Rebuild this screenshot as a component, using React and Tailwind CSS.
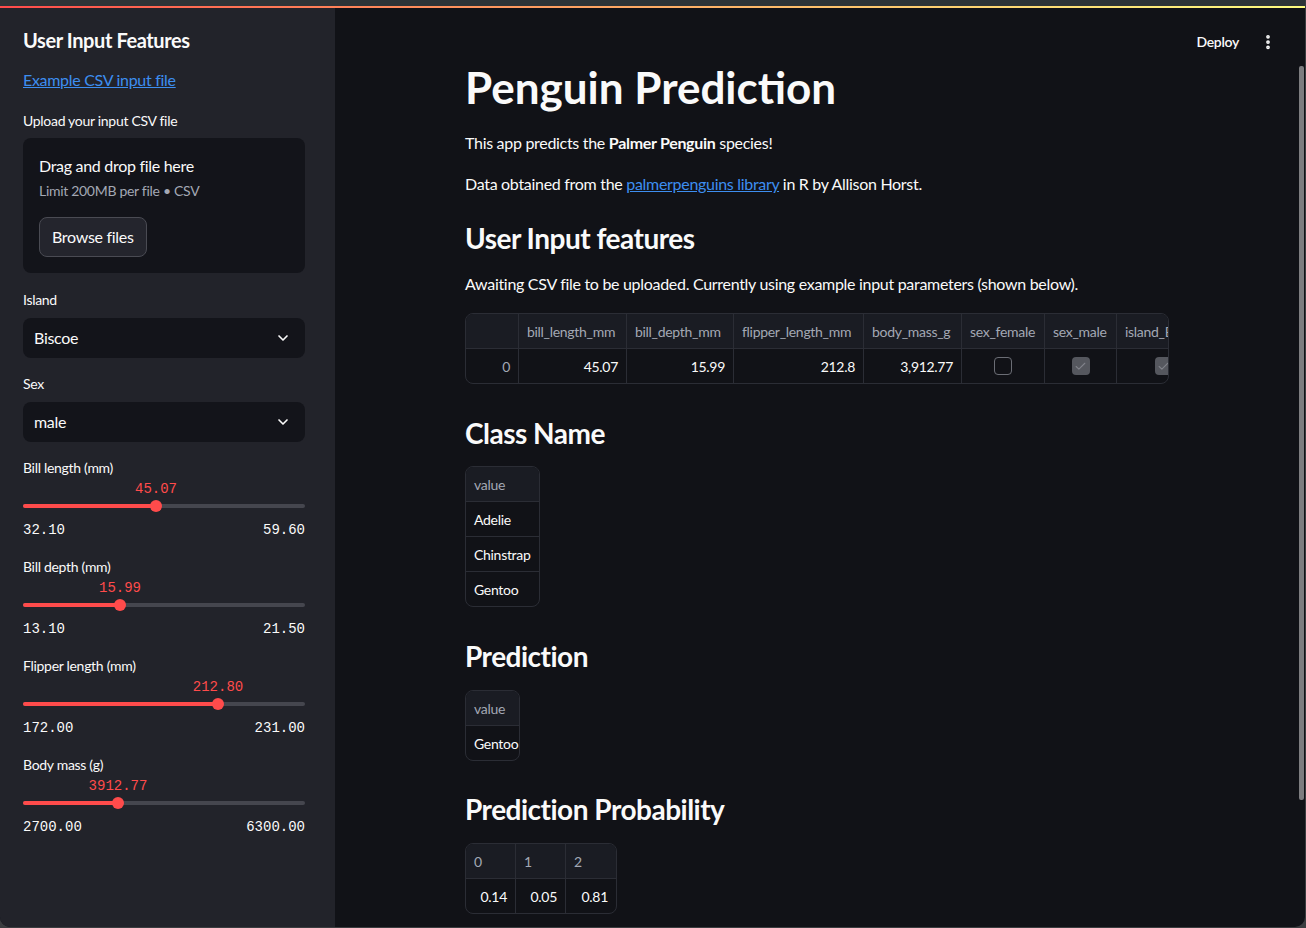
import React from "react";
import { ChevronDown, EllipsisVertical, Check } from "lucide-react";

const sliders = [
    { label: "Bill length (mm)", value: 45.07, min: 32.1, max: 59.6, fmt: "45.07" },
    { label: "Bill depth (mm)", value: 15.99, min: 13.1, max: 21.5, fmt: "15.99" },
    { label: "Flipper length (mm)", value: 212.8, min: 172, max: 231, fmt: "212.80" },
    { label: "Body mass (g)", value: 3912.77, min: 2700, max: 6300, fmt: "3912.77" },
];

function Select({ label, value }) {
    return (
        <div className="mb-[16px]">
            <div className="text-[14px] leading-[20px] text-[#fafafa] mb-[8px]">{label}</div>
            <div className="h-[40px] rounded-[8px] bg-[#13141a] flex items-center justify-between pl-[11px] pr-[14px]">
                <span className="text-[16px] text-[#fafafa]">{value}</span>
                <ChevronDown size={16} strokeWidth={2.5} className="text-[#fafafa]" />
            </div>
        </div>
    );
}

function Slider({ s }) {
    const pct = ((s.value - s.min) / (s.max - s.min)) * 100;
    return (
        <div className="h-[99px] overflow-visible">
            <div className="text-[14px] leading-[20px] text-[#fafafa]">{s.label}</div>
            <div className="relative h-[20px]">
                <span
                    className="absolute top-[1px] -translate-x-1/2 font-['Liberation_Mono',monospace] tracking-normal text-[14px] leading-[20px] text-[#ff4b4b]"
                    style={{ left: `${pct}%` }}
                >
                    {s.fmt}
                </span>
            </div>
            <div className="relative h-[16px] flex items-center">
                <div className="h-[4px] w-full rounded-full bg-[#45464e]">
                    <div className="h-full rounded-full bg-[#ff4b4b]" style={{ width: `${pct}%` }} />
                </div>
                <div
                    className="absolute top-[2px] w-[12px] h-[12px] -ml-[6px] rounded-full bg-[#ff4b4b]"
                    style={{ left: `${pct}%` }}
                />
            </div>
            <div className="mt-[6px] flex justify-between font-['Liberation_Mono',monospace] tracking-normal text-[14px] leading-[20px] text-[#fafafa]">
                <span>{s.min.toFixed(2)}</span>
                <span>{s.max.toFixed(2)}</span>
            </div>
        </div>
    );
}

function Box({ checked }) {
    return checked ? (
        <div className="w-[18px] h-[18px] rounded-[4px] bg-[#55575e] flex items-center justify-center">
            <Check size={13} strokeWidth={2} className="text-[#80828a]" />
        </div>
    ) : (
        <div className="w-[18px] h-[18px] rounded-[4px] border border-[#6b6d75]" />
    );
}

// cols: [{ name, w, align }], rows: arrays of cells
function DataTable({ cols, rows, width }) {
    return (
        <div
            className="rounded-[8px] border border-[#2b2d35] overflow-hidden text-[14px]"
            style={width ? { width } : undefined}
        >
            <div className="flex bg-[#1a1c23] h-[35px] border-b border-[#2b2d35] whitespace-nowrap">
                {cols.map((c, i) => (
                    <div
                        key={i}
                        className={
                            "shrink-0 flex items-center px-[8px] text-[#a3a8b4] overflow-hidden " +
                            (i < cols.length - 1 ? "border-r border-[#2b2d35]" : "")
                        }
                        style={{ width: c.w }}
                    >
                        {c.name}
                    </div>
                ))}
            </div>
            {rows.map((r, ri) => (
                <div
                    key={ri}
                    className={
                        "flex whitespace-nowrap " +
                        (ri < rows.length - 1 ? "h-[35px] border-b border-[#2b2d35]" : "h-[34px]")
                    }
                >
                    {cols.map((c, i) => (
                        <div
                            key={i}
                            className={
                                "shrink-0 flex items-center px-[8px] overflow-hidden " +
                                (c.align === "right" ? "justify-end " : "") +
                                (c.align === "center" ? "justify-center " : "") +
                                (c.index ? "text-[#a3a8b4] " : "text-[#fafafa] ") +
                                (i < cols.length - 1 ? "border-r border-[#2b2d35]" : "")
                            }
                            style={{ width: c.w }}
                        >
                            {r[i]}
                        </div>
                    ))}
                </div>
            ))}
        </div>
    );
}

const inputCols = [
    { name: "", w: 53, align: "right", index: true },
    { name: "bill_length_mm", w: 108, align: "right" },
    { name: "bill_depth_mm", w: 107, align: "right" },
    { name: "flipper_length_mm", w: 130, align: "right" },
    { name: "body_mass_g", w: 98, align: "right" },
    { name: "sex_female", w: 83, align: "center" },
    { name: "sex_male", w: 72, align: "center" },
    { name: "island_Biscoe", w: 94, align: "center" },
    { name: "island_Dream", w: 94, align: "center" },
];

function SectionTitle({ children, className }) {
    return (
        <h3 className={"text-[28px] leading-[34px] font-bold tracking-[-0.5px] text-[#fafafa] " + (className || "")}>
            {children}
        </h3>
    );
}

export default function App() {
    return (
        <div className="w-[1306px] h-[928px] bg-[#3b3d40] overflow-hidden font-['Lato',sans-serif] tracking-[-0.3px]">
            <div className="h-[927px] w-[1305px] flex flex-col bg-[#111217] rounded-b-[10px] overflow-hidden">
                <div className="h-[6px] bg-[#2e3437] shrink-0" />
                <div className="h-[2px] bg-linear-to-r from-[#ff4b4b] to-[#fffd80] shrink-0" />
                <div className="flex flex-1 min-h-0">
                    <aside className="w-[335px] shrink-0 bg-[#22232a] pl-[23px] pr-[30px] pt-[20px]">
                        <h2 className="text-[20px] leading-[24px] font-bold tracking-[-0.4px] text-[#fafafa]">
                            User Input Features
                        </h2>
                        <a className="block mt-[16px] text-[16px] leading-[24px] text-[#3d8ef0] underline">
                            Example CSV input file
                        </a>
                        <div className="mt-[19px] text-[14px] leading-[20px] text-[#fafafa]">
                            Upload your input CSV file
                        </div>
                        <div className="mt-[7px] rounded-[8px] bg-[#13141a] p-[16px]">
                            <div className="text-[16px] leading-[24px] text-[#fafafa]">
                                Drag and drop file here
                            </div>
                            <div className="mt-[3px] text-[14px] leading-[20px] text-[#a3a8b4]">
                                Limit 200MB per file • CSV
                            </div>
                            <button className="mt-[16px] h-[40px] px-[12px] rounded-[8px] border border-[#4a4b53] bg-[#24252d] text-[16px] text-[#fafafa]">
                                Browse files
                            </button>
                        </div>
                        <div className="mt-[17px]">
                            <Select label="Island" value="Biscoe" />
                            <Select label="Sex" value="male" />
                        </div>
                        {sliders.map((s) => (
                            <Slider key={s.label} s={s} />
                        ))}
                    </aside>
                    <main className="flex-1 min-w-0 flex flex-col">
                        <div className="h-[68px] shrink-0 flex items-start justify-end pt-[24px] pr-[22px] gap-[20px]">
                            <span className="text-[14px] leading-[20px] font-semibold text-[#fafafa]">Deploy</span>
                            <EllipsisVertical size={18} strokeWidth={3} className="text-[#fafafa] mt-px" />
                        </div>
                        <div className="w-[704px] mx-auto -mt-[16px]">
                            <h1 className="text-[44px] leading-[54px] font-bold tracking-normal text-[#fafafa]">
                                Penguin Prediction
                            </h1>
                            <p className="mt-[17px] text-[16px] leading-[24px] text-[#fafafa]">
                                This app predicts the <b>Palmer Penguin</b> species!
                            </p>
                            <p className="mt-[17px] text-[16px] leading-[24px] text-[#fafafa]">
                                Data obtained from the{" "}
                                <a className="text-[#3d8ef0] underline">palmerpenguins library</a> in R by
                                Allison Horst.
                            </p>
                            <SectionTitle className="mt-[25px]">User Input features</SectionTitle>
                            <p className="mt-[17px] text-[16px] leading-[24px] text-[#fafafa]">
                                Awaiting CSV file to be uploaded. Currently using example input parameters (shown below).
                            </p>
                            <div className="mt-[17px]">
                                <DataTable
                                    width={704}
                                    cols={inputCols}
                                    rows={[["0", "45.07", "15.99", "212.8", "3,912.77", <Box />, <Box checked />, <Box checked />, <Box />]]}
                                />
                            </div>
                            <SectionTitle className="mt-[32px]">Class Name</SectionTitle>
                            <div className="mt-[16px]">
                                <DataTable
                                    width={75}
                                    cols={[{ name: "value", w: 73 }]}
                                    rows={[["Adelie"], ["Chinstrap"], ["Gentoo"]]}
                                />
                            </div>
                            <SectionTitle className="mt-[32px]">Prediction</SectionTitle>
                            <div className="mt-[17px]">
                                <DataTable
                                    width={55}
                                    cols={[{ name: "value", w: 53 }]}
                                    rows={[["Gentoo"]]}
                                />
                            </div>
                            <SectionTitle className="mt-[31px]">Prediction Probability</SectionTitle>
                            <div className="mt-[17px]">
                                <DataTable
                                    width={152}
                                    cols={[
                                        { name: "0", w: 50, align: "right" },
                                        { name: "1", w: 50, align: "right" },
                                        { name: "2", w: 50, align: "right" },
                                    ]}
                                    rows={[["0.14", "0.05", "0.81"]]}
                                />
                            </div>
                        </div>
                    </main>
                    <div className="w-[6px] shrink-0 pt-[58px]">
                        <div className="h-[734px] w-[5px] bg-[#7d7d80] rounded-[2px]" />
                    </div>
                </div>
            </div>
        </div>
    );
}
